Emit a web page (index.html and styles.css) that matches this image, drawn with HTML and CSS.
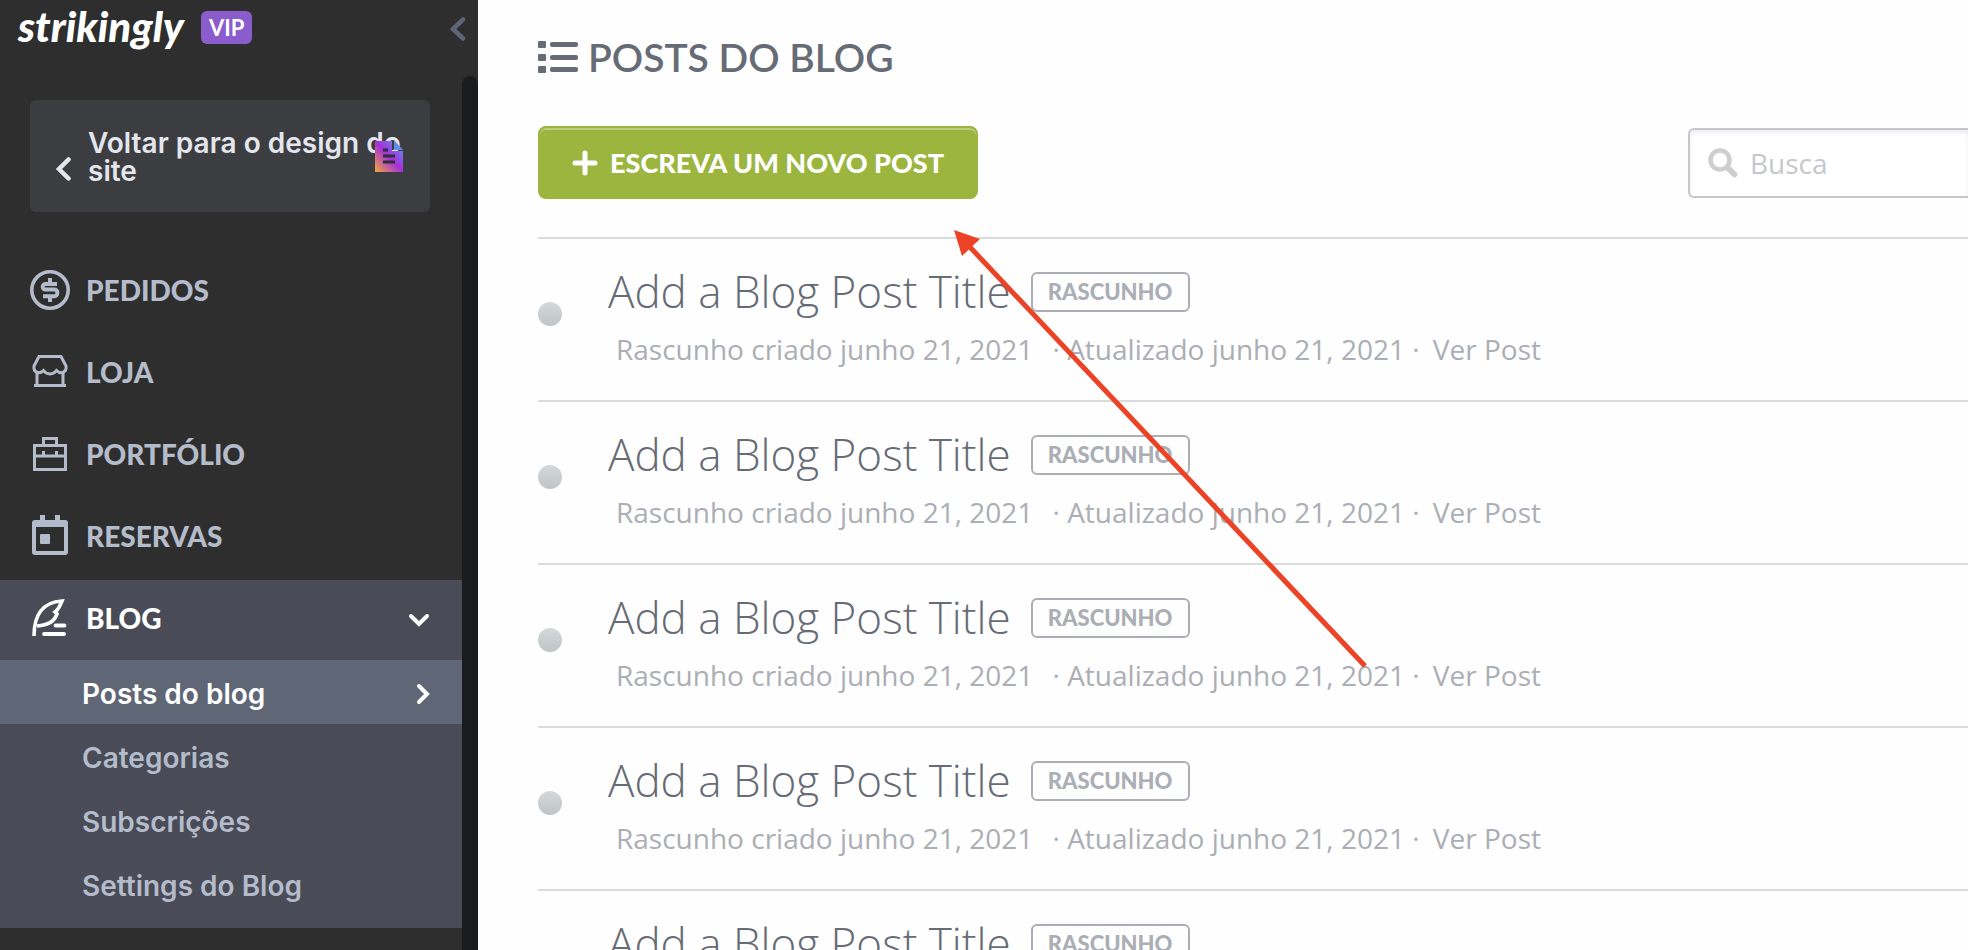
FILE: index.html
```html
<!DOCTYPE html>
<html lang="pt-BR">
<head>
  <meta charset="UTF-8" />
  <meta name="viewport" content="width=device-width, initial-scale=1.0" />
  <title>Posts do blog</title>
  <link rel="stylesheet" href="styles.css">
</head>
<body>
  <aside class="sidebar">
    <header class="brand">
      <a class="logo" href="#">strikingly</a>
      <span class="vip">VIP</span>
      <button class="collapse" aria-label="Recolher menu">
        <svg width="16" height="24" viewBox="0 0 16 24"><path d="M13 2.500L3 12l10 9.500" fill="none" stroke="currentColor" stroke-width="4.500" stroke-linecap="round" /></svg>
      </button>
    </header>

    <div class="scroller">
      <div class="menu">
        <a class="back" href="#">
          <svg width="16" height="24" viewBox="0 0 16 24"><path d="M12.500 2.500L3 12l9.500 9.500" fill="none" stroke="currentColor" stroke-width="4.500" stroke-linecap="round" /></svg>
          <span>Voltar para o design do site</span>
          <svg class="doc" width="28" height="32" viewBox="0 0 28 32">
            <defs>
              <linearGradient id="docFill" x1="0" y1="1" x2="1" y2="0">
                <stop offset="0" stop-color="#f2a93b" />
                <stop offset="0.500" stop-color="#a52fd8" />
                <stop offset="1" stop-color="#5b9df5" />
              </linearGradient>
            </defs>
            <path d="M0 1h17v10h11v21H0z" fill="url(#docFill)" />
            <path d="M19 0l9 10h-9z" fill="#5f8df0" />
            <path d="M8 10h5M8 16h12M8 22h12" stroke="#2e2e3a" stroke-width="3" />
          </svg>
        </a>

        <nav class="nav">
          <a class="item" href="#">
            <svg width="40" height="40" viewBox="0 0 40 40" fill="none" stroke="currentColor">
              <circle cx="20" cy="20" r="18.200" stroke-width="3.600" />
              <path d="M27 14H15.500a2.800 2.800 0 0 0-2.800 2.800v0a2.800 2.800 0 0 0 2.800 2.800h9a2.800 2.800 0 0 1 2.800 2.800v1a2.800 2.800 0 0 1-2.800 2.800H13M20 8v6M20 26v6" stroke-width="4" />
            </svg>
            <span>PEDIDOS</span>
          </a>
          <a class="item" href="#">
            <svg width="40" height="40" viewBox="0 0 40 40" fill="none" stroke="currentColor" stroke-width="3">
              <path d="M9 4.500h22l5 9.500c1 6-5 9-9.500 4.500-3 4.500-10 4.500-13 0C9 23 3 20 4 14z" />
              <path d="M7 19v14M33 19v14M4 33.500h32" />
            </svg>
            <span>LOJA</span>
          </a>
          <a class="item" href="#">
            <svg width="40" height="40" viewBox="0 0 40 40" fill="none" stroke="currentColor" stroke-width="3">
              <rect x="4.500" y="11.500" width="31" height="24" />
              <path d="M13.500 11V4.500h13V11M4.500 22h31M13.500 17v5M26.500 17v5" />
            </svg>
            <span>PORTFÓLIO</span>
          </a>
          <a class="item" href="#">
            <svg width="40" height="42" viewBox="0 0 40 42">
              <path d="M10 0h5v5h10V0h5v5h5a3 3 0 0 1 3 3v29a3 3 0 0 1-3 3H5a3 3 0 0 1-3-3V8a3 3 0 0 1 3-3h5zM6 12v24h28V12z" fill="currentColor" fill-rule="evenodd" />
              <rect x="10" y="19" width="10" height="10" rx="1" fill="currentColor" />
            </svg>
            <span>RESERVAS</span>
          </a>
          <a class="item open" href="#">
            <svg width="40" height="40" viewBox="0 0 40 40" fill="none" stroke="currentColor">
              <path d="M4 38C4 18 12 4 32 3c-2 5-4 9-7 11l2 2c-3 8-9 11-20 12" stroke-width="3.600" />
              <path d="M25.500 27.500h9M14 36h20" stroke-linecap="round" stroke-width="3.800" />
            </svg>
            <span>BLOG</span>
            <svg class="chevron" width="22" height="14" viewBox="0 0 22 14"><path d="M3 3l8 8 8-8" fill="none" stroke="currentColor" stroke-width="4" stroke-linecap="round" /></svg>
          </a>
          <div class="submenu">
            <a class="subitem current" href="#">
              Posts do blog
              <svg width="14" height="22" viewBox="0 0 14 22"><path d="M3 3l8 8-8 8" fill="none" stroke="currentColor" stroke-width="4" stroke-linecap="round" /></svg>
            </a>
            <a class="subitem" href="#">Categorias</a>
            <a class="subitem" href="#">Subscrições</a>
            <a class="subitem" href="#">Settings do Blog</a>
          </div>
        </nav>
      </div>
      <div class="track"></div>
    </div>
  </aside>

  <main class="content">
    <h1 class="title">
      <svg width="40" height="34" viewBox="0 0 40 34" fill="currentColor">
        <rect y="1" width="8" height="7" rx="1" /><rect x="12" y="2" width="28" height="5" rx="2" />
        <rect y="14" width="8" height="7" rx="1" /><rect x="12" y="15" width="28" height="5" rx="2" />
        <rect y="26" width="8" height="7" rx="1" /><rect x="12" y="27" width="28" height="5" rx="2" />
      </svg>
      POSTS DO BLOG
    </h1>

    <div class="toolbar">
      <button class="new-post">
        <svg width="26" height="26" viewBox="0 0 26 26"><path d="M13 3v20M3 13h20" fill="none" stroke="currentColor" stroke-width="5" stroke-linecap="round" /></svg>
        ESCREVA UM NOVO POST
      </button>
      <label class="search">
        <svg width="30" height="30" viewBox="0 0 30 30" fill="none" stroke="currentColor"><circle cx="12" cy="12" r="9.500" stroke-width="4.500" /><path d="M19.500 19.500l7 7" stroke-width="6" stroke-linecap="round" /></svg>
        <input type="text" placeholder="Busca" aria-label="Busca" />
      </label>
    </div>

    <ul class="posts">
      <li class="post">
        <span class="dot"></span>
        <div>
          <h2>Add a Blog Post Title <span class="badge">RASCUNHO</span></h2>
          <p><span>Rascunho criado junho 21, 2021</span> · Atualizado junho 21, 2021 · <a href="#">Ver Post</a></p>
        </div>
      </li>
      <li class="post">
        <span class="dot"></span>
        <div>
          <h2>Add a Blog Post Title <span class="badge">RASCUNHO</span></h2>
          <p><span>Rascunho criado junho 21, 2021</span> · Atualizado junho 21, 2021 · <a href="#">Ver Post</a></p>
        </div>
      </li>
      <li class="post">
        <span class="dot"></span>
        <div>
          <h2>Add a Blog Post Title <span class="badge">RASCUNHO</span></h2>
          <p><span>Rascunho criado junho 21, 2021</span> · Atualizado junho 21, 2021 · <a href="#">Ver Post</a></p>
        </div>
      </li>
      <li class="post">
        <span class="dot"></span>
        <div>
          <h2>Add a Blog Post Title <span class="badge">RASCUNHO</span></h2>
          <p><span>Rascunho criado junho 21, 2021</span> · Atualizado junho 21, 2021 · <a href="#">Ver Post</a></p>
        </div>
      </li>
      <li class="post">
        <span class="dot"></span>
        <div>
          <h2>Add a Blog Post Title <span class="badge">RASCUNHO</span></h2>
        </div>
      </li>
    </ul>

    <!-- arrow pointing at the new post button -->
    <svg class="arrow" width="416" height="440" viewBox="0 0 416 440">
      <path d="M14 15l397 421" stroke="#ec4226" stroke-width="5" />
      <path d="M0 0l26 9L8 26z" fill="#ec4226" />
    </svg>
  </main>
</body>
</html>
```
FILE: styles.css
```css
* {
  box-sizing: border-box;
}
body {
  margin: 0;
  display: flex;
  height: 100vh;
  overflow: hidden;
  background: #fefefe;
  font-family: "Open Sans", sans-serif;
}
a {
  color: inherit;
  text-decoration: none;
}
svg {
  flex: none;
}

/* sidebar */
.sidebar {
  flex: 0 0 478px;
  display: flex;
  flex-direction: column;
  background: #2e2e2e;
  color: #b4bccb;
}
.brand {
  flex: 0 0 76px;
  display: flex;
  align-items: flex-start;
  padding: 0 12px 0 18px;
}
.logo {
  width: 183px;
  color: #fff;
  font: italic 900 42px/52px Lato, sans-serif;
}
.vip {
  margin-top: 11px;
  padding: 0 8px;
  border-radius: 6px;
  background: #8a5ccc;
  color: #fff;
  font: bold 22px/33px Lato, sans-serif;
}
.collapse {
  margin: 17px 0 0 auto;
  padding: 0;
  border: 0;
  background: none;
  color: #5d6475;
  line-height: 0;
}
.scroller {
  flex: 1;
  min-height: 0;
  display: flex;
}
.menu {
  flex: 1;
}
.track {
  width: 16px;
  border-radius: 8px 8px 0 0;
  background: #1a1b1e;
}
.back {
  position: relative;
  display: flex;
  align-items: center;
  gap: 16px;
  height: 112px;
  margin: 24px 32px 40px 30px;
  padding: 2px 24px 0 26px;
  border-radius: 6px;
  background: #3c3d41;
  color: #e4e6ee;
  font: 600 28px/28px Inter, sans-serif;
}
.back > svg:first-child {
  margin-top: 24px;
}
.doc {
  position: absolute;
  top: 40px;
  right: 27px;
}
.item {
  display: flex;
  align-items: center;
  gap: 16px;
  height: 80px;
  margin-bottom: 2px;
  padding: 0 32px 4px 30px;
  font: 900 28px/36px Lato, sans-serif;
}
.item.open {
  margin-bottom: 0;
  background: #494b56;
  color: #fff;
}
.chevron {
  margin: 4px 0 0 auto;
}
.submenu {
  padding-bottom: 12px;
  background: #494b56;
}
.subitem {
  display: flex;
  align-items: center;
  justify-content: space-between;
  height: 64px;
  padding: 4px 32px 0 82px;
  font: 600 28px/36px Inter, sans-serif;
}
.subitem.current {
  background: #5f6676;
  color: #fff;
}

/* posts */
.content {
  position: relative;
  flex: 1;
  min-width: 0;
  padding: 32px 0 0 60px;
}
.title {
  display: flex;
  align-items: center;
  gap: 10px;
  margin: 0;
  color: #666b75;
  font: 600 39px/50px Lato, sans-serif;
}
.toolbar {
  display: flex;
  align-items: center;
  justify-content: space-between;
  margin: 44px 0 38px;
}
.new-post {
  display: flex;
  align-items: center;
  justify-content: center;
  gap: 12px;
  width: 440px;
  height: 73px;
  padding: 0;
  border: 2px solid #9bb53f;
  border-radius: 8px;
  background: #9bb53f;
  box-shadow: inset 0 2px 0 #bccd80;
  color: #fff;
  font: 900 27px/36px Lato, sans-serif;
}
.search {
  display: flex;
  align-items: center;
  gap: 12px;
  width: 280px;
  height: 70px;
  padding-left: 18px;
  border: 2px solid #c6c7cd;
  border-right: 0;
  border-radius: 6px 0 0 6px;
  background: #fff;
  box-shadow: inset 0 3px 4px #eee;
  color: #cfcdcd;
}
.search input {
  flex: 1;
  min-width: 0;
  padding: 0;
  border: 0;
  outline: 0;
  background: none;
  font: 28px/40px "Open Sans", sans-serif;
}
.search input::placeholder {
  color: #c6c7cd;
}
.posts {
  margin: 0;
  padding: 0;
  list-style: none;
}
.post {
  display: flex;
  align-items: flex-start;
  gap: 46px;
  height: 163px;
  padding-top: 22px;
  border-top: 2px solid #dadbdc;
}
.dot {
  width: 24px;
  height: 24px;
  margin-top: 41px;
  border-radius: 50%;
  background: linear-gradient(#d3d8da, #bfc4c6);
}
.post h2 {
  display: flex;
  align-items: flex-start;
  gap: 20px;
  margin: 0;
  color: #666b75;
  font: 300 44px/60px "Open Sans", sans-serif;
}
.badge {
  width: 159px;
  margin-top: 11px;
  border: 2px solid #abaeb4;
  border-radius: 6px;
  color: #abaeb4;
  font: 900 22px/36px Lato, sans-serif;
  text-align: center;
}
.post p {
  margin: 5px 0 0 8px;
  color: #abaeb4;
  font-size: 28px;
  line-height: 46px;
}
.post p span {
  margin-right: 12px;
}
.post p a {
  margin-left: 6px;
}
.arrow {
  position: absolute;
  top: 230px;
  left: 476px;
}
```
